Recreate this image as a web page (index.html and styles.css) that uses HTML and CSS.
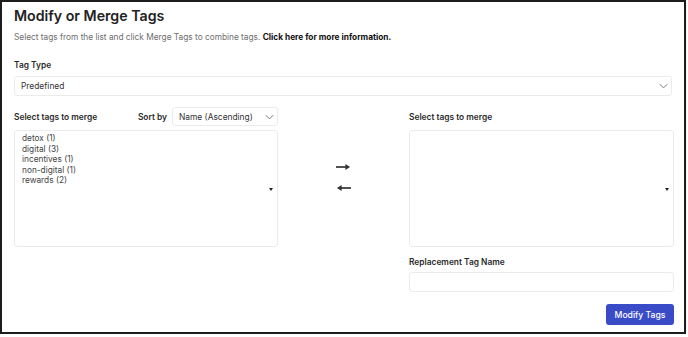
FILE: index.html
```html
<!DOCTYPE html>
<html lang="en">
<head>
    <meta charset="UTF-8">
    <title>Modify or Merge Tags</title>
    <link rel="stylesheet" href="styles.css">
</head>
<body>
    <div class="frame">
        <h1 class="title">Modify or Merge Tags</h1>
        <p class="intro">Select tags from the list and click Merge Tags to combine tags. <b>Click here for more information.</b></p>

        <!-- Тип тега -->
        <label class="label">Tag Type</label>
        <div class="select wide">
            <span>Predefined</span>
            <svg class="chevron" viewBox="0 0 12 8"><path d="M1 1.5l5 5 5-5" fill="none" stroke="#777" stroke-width="1.3"/></svg>
        </div>

        <div class="merge">
            <!-- Левый список -->
            <div class="col">
                <div class="col-head">
                    <span class="label">Select tags to merge</span>
                    <span class="sort">
                        <span class="label">Sort by</span>
                        <span class="select sort-select">
                            <span>Name (Ascending)</span>
                            <svg class="chevron" viewBox="0 0 12 8"><path d="M1 1.5l5 5 5-5" fill="none" stroke="#777" stroke-width="1.3"/></svg>
                        </span>
                    </span>
                </div>
                <div class="listbox">
                    <ul class="tags">
                        <li>detox (1)</li>
                        <li>digital (3)</li>
                        <li>incentives (1)</li>
                        <li>non-digital (1)</li>
                        <li>rewards (2)</li>
                    </ul>
                    <span class="caret"></span>
                </div>
            </div>

            <!-- Кнопки перемещения -->
            <div class="arrows">
                <svg viewBox="0 0 16 8"><path d="M0 4h11" stroke="#333" stroke-width="1.8"/><path d="M10 0.8l5 3.2-5 3.2z" fill="#333"/></svg>
                <svg viewBox="0 0 16 8"><path d="M5 4h11" stroke="#333" stroke-width="1.8"/><path d="M6 0.8l-5 3.2 5 3.2z" fill="#333"/></svg>
            </div>

            <!-- Правый список -->
            <div class="col">
                <div class="col-head">
                    <span class="label">Select tags to merge</span>
                </div>
                <div class="listbox">
                    <span class="caret"></span>
                </div>
                <label class="label replace">Replacement Tag Name</label>
                <div class="input"></div>
                <div class="actions">
                    <button class="btn">Modify Tags</button>
                </div>
            </div>
        </div>
    </div>
</body>
</html>
```

FILE: styles.css
```css
body {
    margin: 0;
    font-family: Inter, "Liberation Sans", Arial, sans-serif;
    background-color: #fff;
    color: #222;
}
.frame {
    width: 686px;
    height: 334px;
    box-sizing: border-box;
    border: 2px solid #1c1c1c;
    padding: 5px 12px 0 12px;
    box-shadow: 0 1px 1px #bbb;
}
.title {
    margin: 0;
    font-size: 14.2px;
    font-weight: 600;
    line-height: 17px;
    color: #222;
}
.intro {
    margin: 7px 0 0;
    font-size: 8.3px;
    line-height: 12px;
    color: #6e6e6e;
}
.intro b {
    color: #111;
    font-weight: 700;
}
.label {
    display: block;
    font-size: 8.4px;
    font-weight: 600;
    color: #2a2a2a;
    line-height: 12px;
}
.frame > .label {
    margin-top: 16px;
}
.select {
    display: flex;
    align-items: center;
    justify-content: space-between;
    box-sizing: border-box;
    border: 1px solid #ebebeb;
    border-radius: 3px;
    font-size: 8.4px;
    color: #333;
    background: #fff;
}
.select.wide {
    height: 20px;
    margin-top: 5px;
    padding: 0 3px 0 6px;
}
.chevron {
    width: 9px;
    height: 6px;
}
.merge {
    display: grid;
    grid-template-columns: 264px 131px 265px;
    margin-top: 11px;
}
.col-head {
    display: flex;
    align-items: center;
    justify-content: space-between;
    height: 19px;
}
.sort {
    display: flex;
    align-items: center;
    gap: 5px;
}
.sort .label {
    display: inline;
}
.sort-select {
    width: 106px;
    height: 19px;
    padding: 0 3px 0 6px;
}
.listbox {
    position: relative;
    box-sizing: border-box;
    height: 117px;
    margin-top: 4px;
    border: 1px solid #ebebeb;
    border-radius: 3px;
}
.tags {
    list-style: none;
    margin: 0;
    padding: 2px 7px;
    font-size: 8.3px;
    line-height: 10.5px;
    color: #444;
}
.caret {
    position: absolute;
    right: 4px;
    top: 57px;
    border-left: 2.5px solid transparent;
    border-right: 2.5px solid transparent;
    border-top: 3px solid #222;
}
.arrows {
    display: flex;
    flex-direction: column;
    align-items: center;
    gap: 13px;
    padding-top: 33px;
    margin-top: 23px;
}
.arrows svg {
    width: 15px;
    height: 8px;
}
.replace {
    margin-top: 9px;
}
.input {
    box-sizing: border-box;
    height: 20px;
    margin-top: 4px;
    border: 1px solid #ebebeb;
    border-radius: 3px;
}
.actions {
    display: flex;
    justify-content: flex-end;
    margin-top: 12px;
}
.btn {
    width: 68px;
    height: 21px;
    border: none;
    border-radius: 3px;
    background: #3a4bc8;
    color: #fff;
    font-family: inherit;
    font-size: 8.6px;
    font-weight: 500;
    padding: 0;
}
```
